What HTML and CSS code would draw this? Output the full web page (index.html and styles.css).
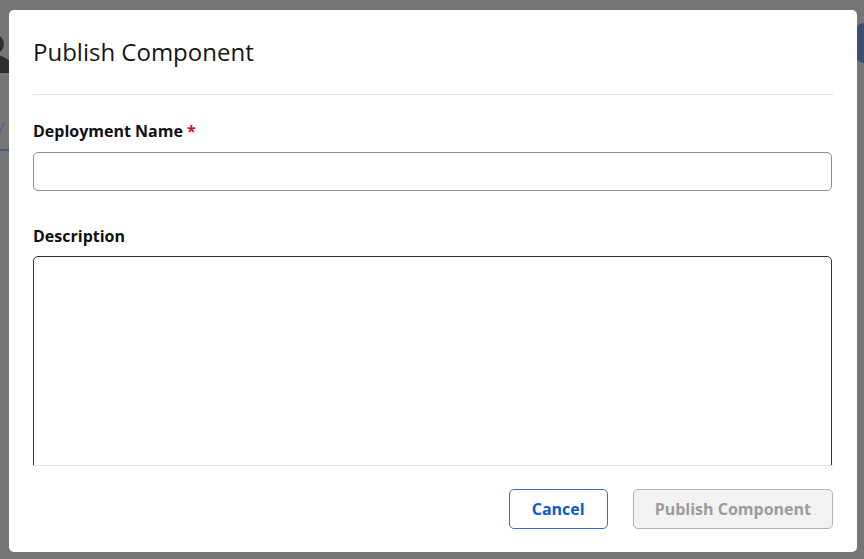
FILE: index.html
```html
<!DOCTYPE html>
<html lang="en">
<head>
<meta charset="utf-8">
<title>Publish Component</title>
<link rel="stylesheet" href="styles.css">
</head>
<body>
<div class="page">
  <header class="topbar">
    <svg class="avatar" width="40" height="40" viewBox="0 0 40 40" aria-hidden="true">
      <circle cx="20" cy="11" r="10" fill="#2e2e2e"/>
      <path d="M1 40 C1 27 10 22 20 22 C30 22 39 27 39 40 Z" fill="#2e2e2e"/>
    </svg>
    <span class="topbtn"></span>
  </header>
  <nav class="tabs">
    <span class="tab">My</span>
  </nav>
</div>

<div class="modal" role="dialog" aria-labelledby="dlg-title">
  <div class="modal-head">
    <h2 id="dlg-title" class="modal-title">Publish Component</h2>
  </div>
  <div class="modal-body">
    <label class="field-label" for="dep-name">Deployment Name <span class="req">*</span></label>
    <input id="dep-name" class="text-input" type="text">
    <label class="field-label desc-label" for="dep-desc">Description</label>
    <textarea id="dep-desc" class="text-area"></textarea>
  </div>
  <div class="modal-foot">
    <button class="btn btn-outline" type="button">Cancel</button>
    <button class="btn btn-disabled" type="button" disabled>Publish Component</button>
  </div>
</div>
</body>
</html>
```

FILE: styles.css
```css
html, body {
  margin: 0;
  padding: 0;
}
body {
  background: #767676;
  font-family: "Open Sans", "Noto Sans", sans-serif;
  width: 864px;
  height: 559px;
  overflow: hidden;
}
.page {
  display: flex;
  flex-direction: column;
}
.topbar {
  display: flex;
  justify-content: space-between;
  align-items: flex-start;
  height: 100px;
}
.avatar {
  margin: 33px 0 0 -26px;
}
.topbtn {
  display: block;
  width: 120px;
  height: 40px;
  margin: 23px -112px 0 0;
  background: #3c4e6c;
  border-radius: 8px;
}
.tabs {
  display: flex;
  height: 49px;
  border-bottom: 2px solid #3e5c8c;
  width: 9px;
  overflow: hidden;
}
.tab {
  font-size: 16px;
  color: #4a6795;
  margin: 14px 0 0 -18px;
  white-space: nowrap;
}

.modal {
  position: fixed;
  left: 9px;
  top: 10px;
  width: 848px;
  height: 542px;
  background: #ffffff;
  border-radius: 5px;
  display: flex;
  flex-direction: column;
  color: #161616;
}
.modal-head {
  padding: 0 24px;
}
.modal-title {
  margin: 0;
  font-size: 24px;
  font-weight: 400;
  line-height: 36px;
  padding: 24px 0 24px;
  border-bottom: 1px solid #dde0f2;
}
.modal-body {
  flex: 1;
  min-height: 0;
  overflow: hidden;
  padding: 24px 25px 0 24px;
  display: flex;
  flex-direction: column;
}
.modal-body > * {
  flex-shrink: 0;
}
.field-label {
  font-size: 16px;
  font-weight: 700;
  line-height: 24px;
  color: #111111;
}
.req {
  color: #c8102e;
}
.text-input {
  margin-top: 9px;
  height: 39px;
  box-sizing: border-box;
  border: 1px solid #8c8c8c;
  border-radius: 5px;
  font: inherit;
  padding: 0 12px;
  width: 100%;
}
.desc-label {
  margin-top: 33px;
}
.text-area {
  margin-top: 8px;
  height: 260px;
  box-sizing: border-box;
  border: 1px solid #333333;
  border-radius: 5px;
  font: inherit;
  padding: 8px 12px;
  width: 100%;
  resize: none;
}
.modal-foot {
  margin: 0 24px;
  border-top: 1px solid #dde0f2;
  height: 87px;
  display: flex;
  justify-content: flex-end;
  align-items: flex-start;
  padding-top: 23px;
  box-sizing: border-box;
  gap: 25px;
}
.btn {
  height: 40px;
  box-sizing: border-box;
  border-radius: 5px;
  font-family: inherit;
  font-size: 16px;
  font-weight: 700;
  line-height: 24px;
  cursor: pointer;
}
.btn-outline {
  padding: 0 22px;
  background: #ffffff;
  border: 1px solid #2f6fd8;
  color: #0b5cc9;
}
.btn-disabled {
  padding: 0 21px;
  background: #f2f2f2;
  border: 1px solid #b3b3b3;
  color: #9b9b9b;
  cursor: default;
}
```
